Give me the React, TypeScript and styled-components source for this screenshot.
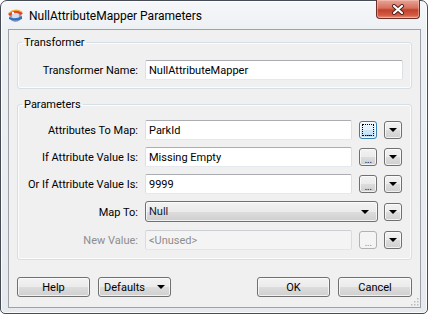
import React from 'react';
import styled, { createGlobalStyle, css } from 'styled-components';

const GlobalStyle = createGlobalStyle`
	html, body {
		margin: 0;
		padding: 0;
		background: #ffffff;
	}
	body {
		font-family: Roboto, 'Liberation Sans', sans-serif;
		font-size: 11px;
		color: #000000;
	}
`;

const Window = styled.div`
	position: relative;
	box-sizing: border-box;
	width: 428px;
	height: 314px;
	display: flex;
	flex-direction: column;
	padding: 0 6px 5px 7px;
	border: 1px solid #454c55;
	border-radius: 7px 7px 5px 5px;
	background: linear-gradient(#f5f7f9, #eef1f4 28px, #e6eaee);
	box-shadow: inset 0 0 0 1px rgba(255, 255, 255, 0.85);
`;

const TitleBar = styled.div`
	height: 28px;
	margin: 0 -6px 0 -7px;
	display: flex;
	align-items: flex-start;
`;

const AppIcon = styled.svg`
	width: 17px;
	height: 16px;
	margin: 6px 5px 0 6px;
	flex: none;
`;

const Title = styled.span`
	margin-top: 7px;
	font-size: 12px;
	line-height: 16px;
	color: #000000;
`;

const CloseButton = styled.div`
	margin: -1px 7px 0 auto;
	width: 44px;
	height: 19px;
	box-sizing: border-box;
	display: flex;
	align-items: center;
	justify-content: center;
	border: 1px solid #6b2f26;
	border-top: none;
	border-radius: 0 0 4px 4px;
	background: linear-gradient(#e8a597, #d7705e 45%, #c2412c 55%, #d45a44 85%, #e59a86);
	box-shadow: inset 0 0 0 1px rgba(255, 210, 200, 0.45);
`;

const Client = styled.div`
	position: relative;
	flex: 1;
	display: flex;
	flex-direction: column;
	border: 1px solid #9da2a8;
	background: #f0f0f0;
`;

const Group = styled.fieldset<{ $top: number; $padTop: number; $padBottom: number }>`
	margin: ${({ $top }) => $top}px 8px 0 8px;
	padding: ${({ $padTop, $padBottom }) => `${$padTop}px 8px ${$padBottom}px 8px`};
	border: 1px solid #d5dfe5;
	border-radius: 3px;
	box-shadow: inset 0 0 0 1px #fbfcfd;
	min-width: 0;
`;

const Legend = styled.legend`
	margin-left: -4px;
	padding: 0 2px;
	font-size: 11px;
	line-height: 15px;
	color: #000000;
`;

const FormGrid = styled.div`
	display: grid;
	grid-template-columns: 112px 1fr 18px 19px;
	column-gap: 7px;
	row-gap: 7px;
	align-items: center;
`;

const Label = styled.label<{ $disabled?: boolean }>`
	text-align: right;
	white-space: nowrap;
	font-size: 11px;
	color: ${({ $disabled }) => ($disabled ? '#8d8d8d' : '#000000')};
`;

const TextBox = styled.div<{ $span?: number; $disabled?: boolean }>`
	grid-column: span ${({ $span }) => $span || 1};
	box-sizing: border-box;
	height: 20px;
	padding: 0 3px;
	display: flex;
	align-items: center;
	font-size: 11px;
	border: 1px solid;
	border-radius: 2px;
	${({ $disabled }) =>
		$disabled
			? css`
					border-color: #cdcfd3 #d9dce0 #e3e5e8;
					background: #f4f4f4;
					color: #8d8d8d;
			  `
			: css`
					border-color: #abadb3 #dbdfe6 #e3e9ef;
					background: #ffffff;
					color: #000000;
			  `}
`;

const buttonFace = css`
	box-sizing: border-box;
	border: 1px solid #707070;
	border-radius: 3px;
	background: linear-gradient(#f2f2f2, #ebebeb 50%, #dddddd 50%, #cfcfcf);
	box-shadow: inset 0 0 0 1px rgba(255, 255, 255, 0.7);
`;

const Combo = styled.div`
	${buttonFace};
	grid-column: span 2;
	height: 21px;
	margin: 0 -1px 1px 0;
	padding: 0 8px 0 3px;
	display: flex;
	align-items: center;
	justify-content: space-between;
	font-size: 11px;
	color: #0a1a3a;
`;

const SmallButton = styled.div<{ $focused?: boolean; $disabled?: boolean }>`
	${buttonFace};
	position: relative;
	width: 18px;
	height: 18px;
	display: flex;
	align-items: center;
	justify-content: center;
	${({ $focused }) =>
		$focused &&
		css`
			border-color: #3c7fb1;
			background: linear-gradient(#eef7fd, #e1f1fb 50%, #cfe8f8 50%, #c2e1f5);
			&::after {
				content: '';
				position: absolute;
				inset: 2px;
				border: 1px dotted #000000;
			}
		`}
	${({ $disabled }) =>
		$disabled &&
		css`
			border-color: #adb2b5;
			background: #f4f4f4;
			box-shadow: none;
		`}
`;

const Dots = styled.span<{ $disabled?: boolean }>`
	font-size: 11px;
	line-height: 11px;
	margin-top: 4px;
	letter-spacing: -0.5px;
	color: ${({ $disabled }) => ($disabled ? '#9a9a9a' : '#1a2a4a')};
`;

const Arrow = styled.span`
	width: 0;
	height: 0;
	border-left: 4px solid transparent;
	border-right: 4px solid transparent;
	border-top: 4px solid #000000;
`;

const ButtonRow = styled.div`
	margin-top: auto;
	padding: 0 8px 10px 8px;
	display: flex;
	gap: 8px;
`;

const Spacer = styled.div`
	flex: 1;
`;

const PushButton = styled.div<{ $width?: number }>`
	${buttonFace};
	width: ${({ $width }) => $width || 73}px;
	height: 20px;
	display: flex;
	align-items: center;
	justify-content: center;
	gap: 12px;
	font-size: 11px;
	color: #000000;
`;

const Grip = styled.svg`
	position: absolute;
	right: 1px;
	bottom: 1px;
	width: 9px;
	height: 9px;
`;

const DropButton = () => (
	<SmallButton>
		<Arrow />
	</SmallButton>
);

const rows = [
	{ label: 'Attributes To Map:', value: 'ParkId', focused: true },
	{ label: 'If Attribute Value Is:', value: 'Missing Empty' },
	{ label: 'Or If Attribute Value Is:', value: '9999' },
];

const App = () => {
	return (
		<>
			<GlobalStyle />
			<Window>
				<TitleBar>
					<AppIcon viewBox="0 0 17 16">
						<circle cx="8.5" cy="9" r="6" fill="#9aa3ad" />
						<circle cx="8.5" cy="9" r="3.5" fill="#d7dce1" />
						<path d="M1 7 Q8 0 16 6 L14 8 Q8 3 3 9 Z" fill="#e0402a" />
						<path d="M2 6 Q8 1 15 5" stroke="#f6b13a" strokeWidth="1.2" fill="none" />
						<path d="M2 10 Q8 13 15 9 L15 12 Q8 15 2 12 Z" fill="#2f6fc9" />
						<circle cx="6" cy="6" r="1.2" fill="#ffffff" />
					</AppIcon>
					<Title>NullAttributeMapper Parameters</Title>
					<CloseButton>
						<svg width="14" height="11" viewBox="0 0 14 11">
							<path d="M3 2 L11 9 M11 2 L3 9" stroke="#4a1d16" strokeWidth="4" strokeLinecap="round" />
							<path d="M3 2 L11 9 M11 2 L3 9" stroke="#ffffff" strokeWidth="2.2" strokeLinecap="round" />
						</svg>
					</CloseButton>
				</TitleBar>
				<Client>
					<Group $top={5} $padTop={10} $padBottom={8}>
						<Legend>Transformer</Legend>
						<FormGrid>
							<Label>Transformer Name:</Label>
							<TextBox $span={3}>NullAttributeMapper</TextBox>
						</FormGrid>
					</Group>
					<Group $top={8} $padTop={8} $padBottom={9}>
						<Legend>Parameters</Legend>
						<FormGrid>
							{rows.map((row) => (
								<React.Fragment key={row.label}>
									<Label>{row.label}</Label>
									<TextBox>{row.value}</TextBox>
									<SmallButton $focused={row.focused}>
										<Dots>...</Dots>
									</SmallButton>
									<DropButton />
								</React.Fragment>
							))}
							<Label>Map To:</Label>
							<Combo>
								<span>Null</span>
								<Arrow />
							</Combo>
							<DropButton />
							<Label $disabled>New Value:</Label>
							<TextBox $disabled>&lt;Unused&gt;</TextBox>
							<SmallButton $disabled>
								<Dots $disabled>...</Dots>
							</SmallButton>
							<DropButton />
						</FormGrid>
					</Group>
					<ButtonRow>
						<PushButton>Help</PushButton>
						<PushButton>
							<span>Defaults</span>
							<Arrow />
						</PushButton>
						<Spacer />
						<PushButton>OK</PushButton>
						<PushButton $width={74}>Cancel</PushButton>
					</ButtonRow>
					<Grip viewBox="0 0 9 9">
						{[
							[7, 1],
							[7, 4],
							[4, 4],
							[7, 7],
							[4, 7],
							[1, 7],
						].map(([x, y]) => (
							<rect key={`${x}-${y}`} x={x} y={y} width="1.5" height="1.5" fill="#b8bcc0" />
						))}
					</Grip>
				</Client>
			</Window>
		</>
	);
};

export default App;
